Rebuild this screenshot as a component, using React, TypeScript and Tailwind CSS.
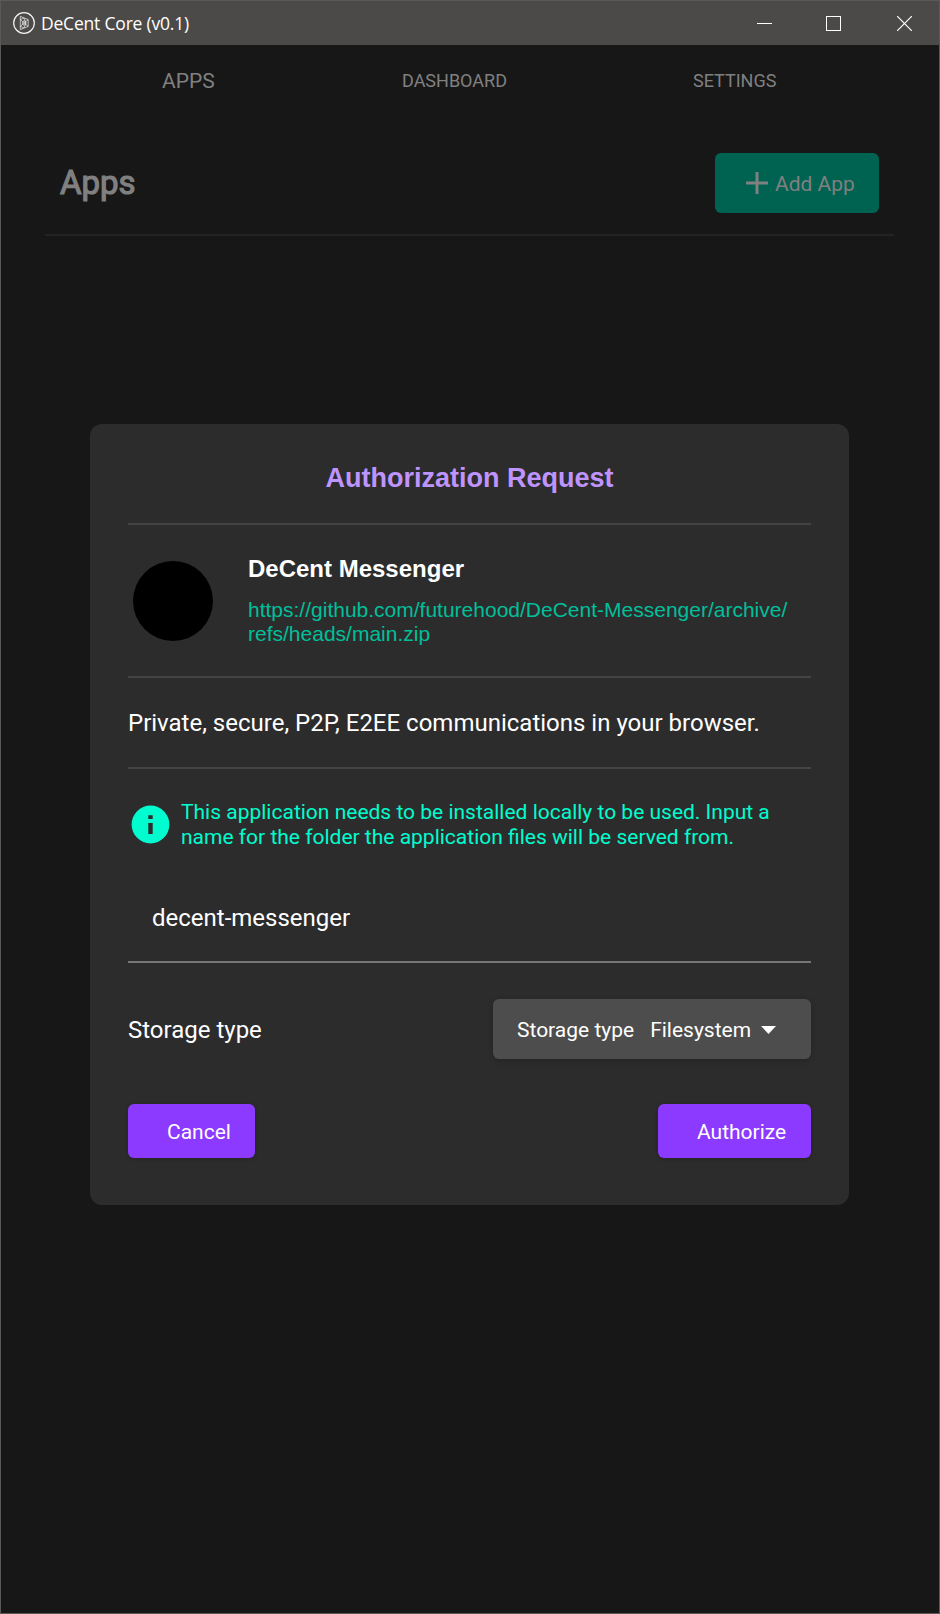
import React from "react";

function TitleBar() {
  return (
    <header className="flex h-[44px] shrink-0 items-center justify-between bg-[#4c4a48] text-white">
      <div className="flex items-center gap-[6px] pl-[12px]">
        <svg width="22" height="22" viewBox="0 0 22 22" fill="none" stroke="#f2f2f2">
          <circle cx="11" cy="11" r="10.3" strokeWidth="1.2" />
          <path d="M7.3 4.3 L15.2 7.6 V14.4 L7.3 17.7 Z M7.3 7.6 L15.2 14.4 M7.3 14.4 L15.2 7.6 M7.3 7.6 L11 6 L13 11 L11 16 L7.3 14.4 M9 11 L11 8.5 L13 11 L11 13.5 Z" strokeWidth="0.7" />
        </svg>
        <span className="font-['Open_Sans','Noto_Sans',sans-serif] text-[17.5px] leading-[24px] tracking-[-0.2px]">DeCent Core (v0.1)</span>
      </div>
      <div className="flex">
        <button className="flex h-[43px] w-[69px] items-center justify-center" aria-label="Minimize">
          <svg width="15" height="15" viewBox="0 0 15 15" stroke="white"><path d="M0 7.5H15" /></svg>
        </button>
        <button className="flex h-[43px] w-[69px] items-center justify-center" aria-label="Maximize">
          <svg width="15" height="15" viewBox="0 0 15 15" fill="none" stroke="white"><rect x=".5" y=".5" width="14" height="14" /></svg>
        </button>
        <button className="flex h-[43px] w-[71px] items-center justify-center pl-[2px]" aria-label="Close">
          <svg width="15" height="15" viewBox="0 0 15 15" stroke="white" strokeWidth="1.2"><path d="M0 0L15 15M15 0L0 15" /></svg>
        </button>
      </div>
    </header>
  );
}

function Rule() {
  return <div className="h-[2px] shrink-0 bg-[#444444]" />;
}

function AuthorizationDialog() {
  return (
    <section className="ml-[89px] mt-[188px] flex h-[781px] w-[759px] flex-col rounded-[12px] bg-[#2c2c2c] px-[38px] text-white">
      <h2 className="flex h-[99px] items-center justify-center pt-[10px] font-['Liberation_Sans',Arial,sans-serif] text-[27px] font-bold text-[#bf94ff]">
        Authorization Request
      </h2>
      <Rule />
      <div className="flex h-[151px] pl-[5px] font-['Liberation_Sans',Arial,sans-serif]">
        <div className="mt-[36px] size-[80px] shrink-0 rounded-full bg-black" />
        <div className="ml-[35px] mt-[28px]">
          <h3 className="text-[24px] leading-[32px] font-bold">DeCent Messenger</h3>
          <a className="mt-[13px] block text-[21px] leading-[24px] text-[#00bf9a]">
            https://github.com/futurehood/DeCent-Messenger/archive/<br />refs/heads/main.zip
          </a>
        </div>
      </div>
      <Rule />
      <p className="flex h-[89px] items-center text-[24px]">Private, secure, P2P, E2EE communications in your browser.</p>
      <Rule />
      <div className="flex h-[108px] items-center pt-[3px] text-[#00fccf]">
        <svg className="ml-[3px] shrink-0" width="39" height="39" viewBox="0 0 39 39">
          <circle cx="19.5" cy="19.5" r="18.9" fill="#00fccf" />
          <path d="M17.3 10.2h4.4v3.8h-4.4zM17.3 18h4.4v11h-4.4z" fill="#2c2c2c" />
        </svg>
        <p className="ml-[11px] text-[21px] leading-[25px]">
          This application needs to be installed locally to be used. Input a<br />name for the folder the application files will be served from.
        </p>
      </div>
      <div className="flex h-[86px] items-center border-b-2 border-[#777777] px-[24px] pb-[2px] text-[24px]">
        decent-messenger
      </div>
      <div className="mt-[36px] flex h-[60px] items-center justify-between">
        <span className="pt-[2px] text-[24px]">Storage type</span>
        <button className="flex h-[60px] w-[318px] items-center rounded-[6px] bg-[#4d4d4d] pl-[24px] text-[21px] shadow-[0_2px_6px_rgba(0,0,0,0.2)]">
          <span className="pt-[3px]">Storage type</span>
          <span className="ml-[16px] pt-[3px]">Filesystem</span>
          <svg className="mt-[2px] ml-[10px]" width="15" height="8" viewBox="0 0 15 8"><path d="M0 0H15L7.5 8Z" fill="white" /></svg>
        </button>
      </div>
      <div className="mt-[45px] flex justify-between text-[21px]">
        <button className="h-[54px] w-[127px] rounded-[6px] bg-[#8c3aff] pt-[3px] pl-[39px] text-left shadow-[0_1px_4px_rgba(0,0,0,0.2)]">Cancel</button>
        <button className="h-[54px] w-[153px] rounded-[6px] bg-[#8c3aff] pt-[3px] pl-[39px] text-left shadow-[0_1px_4px_rgba(0,0,0,0.2)]">Authorize</button>
      </div>
    </section>
  );
}

export default function App() {
  return (
    <div className="flex h-[1614px] w-[940px] flex-col border border-[#5b5958] bg-[#171717] font-[Roboto,'Liberation_Sans',sans-serif]">
      <TitleBar />
      <nav className="flex h-[71px] items-center text-[#808080]">
        <span className="ml-[161px] w-[240px] pt-[2px] text-[21px]">APPS</span>
        <span className="w-[291px] text-[18px]">DASHBOARD</span>
        <span className="text-[18px]">SETTINGS</span>
      </nav>
      <div className="ml-[44px] mr-[45px] mt-[37px] flex h-[83px] shrink-0 justify-between border-b-2 border-[#232323] pl-[15px] pr-[15px] text-[#808080]">
        <h1 className="text-[33px] leading-[60px] font-normal [-webkit-text-stroke:1.2px_#808080]">Apps</h1>
        <button className="flex h-[60px] w-[164px] items-center rounded-[6px] bg-[#006250] pl-[31px] text-[21px]">
          <svg width="22" height="22" viewBox="0 0 22 22" stroke="#808080" strokeWidth="3"><path d="M11 0V22M0 11H22" /></svg>
          <span className="ml-[7px] pt-[3px]">Add App</span>
        </button>
      </div>
      <AuthorizationDialog />
    </div>
  );
}
